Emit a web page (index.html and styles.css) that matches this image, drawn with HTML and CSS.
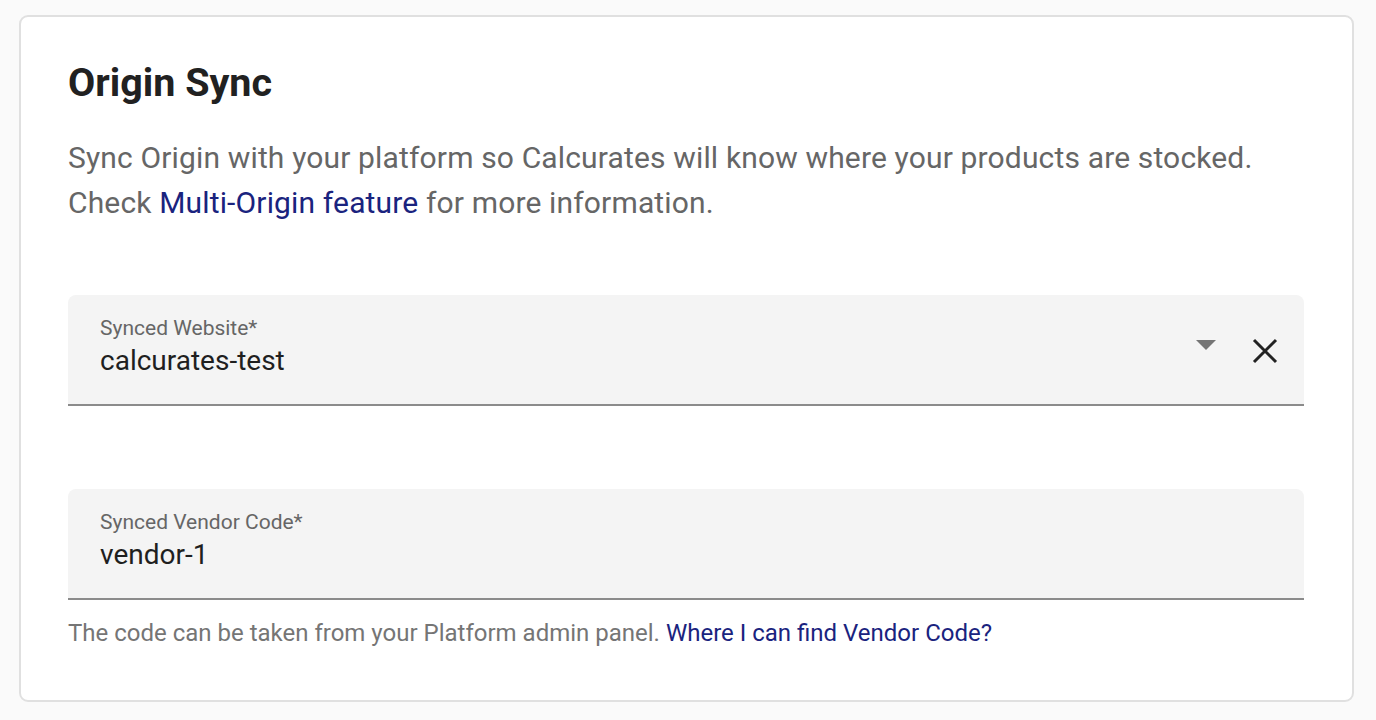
FILE: index.html
```html
<!DOCTYPE html>
<html>
<head>
<meta charset="utf-8">
<link rel="stylesheet" href="styles.css">
</head>
<body>
<div class="card">
  <h1 class="title">Origin Sync</h1>
  <p class="desc">Sync Origin with your platform so Calcurates will know where your products are stocked.<br>Check <a class="link" href="#">Multi-Origin feature</a> for more information.</p>
  <div class="field field-first">
    <div class="field-text">
      <div class="label">Synced Website*</div>
      <div class="value">calcurates-test</div>
    </div>
    <div class="adorn">
      <svg class="caret" width="20" height="10" viewBox="0 0 20 10"><path d="M0 0 L20 0 L10 10 Z" fill="#757575"/></svg>
      <svg class="close" width="26" height="26" viewBox="0 0 26 26"><path d="M2 2 L24 24 M24 2 L2 24" stroke="#222" stroke-width="3" fill="none"/></svg>
    </div>
  </div>
  <div class="field field-second">
    <div class="field-text">
      <div class="label">Synced Vendor Code*</div>
      <div class="value">vendor-1</div>
    </div>
  </div>
  <p class="helper">The code can be taken from your Platform admin panel. <a class="link" href="#">Where I can find Vendor Code?</a></p>
</div>
</body>
</html>
```

FILE: styles.css
```css
html, body {
  margin: 0;
  padding: 0;
  background: #fafafa;
}
body {
  padding: 15px 22px 18px 19px;
  font-family: Roboto, "Liberation Sans", sans-serif;
}
.card {
  background: #fff;
  border: 2px solid #e0e0e0;
  border-radius: 9px;
  padding: 40px 48px 0 47px;
  height: 687px;
  box-sizing: border-box;
}
.title {
  margin: 0;
  font-size: 39.5px;
  font-weight: 700;
  line-height: 52px;
  color: #212121;
}
.desc {
  margin: 26px 0 0 0;
  font-size: 30px;
  letter-spacing: 0.15px;
  line-height: 45px;
  color: #666;
}
.link {
  color: #1a237e;
  text-decoration: none;
}
.field {
  background: #f4f4f4;
  border-radius: 8px 8px 0 0;
  border-bottom: 2px solid #8b8b8b;
  height: 111px;
  box-sizing: border-box;
  display: flex;
  align-items: flex-start;
  padding: 0 26px 0 32px;
}
.field-first {
  margin-top: 70px;
}
.field-second {
  margin-top: 83px;
}
.field-text {
  flex: 1;
  display: flex;
  flex-direction: column;
  padding-top: 21px;
}
.label {
  font-size: 21px;
  line-height: 24px;
  color: #666;
}
.value {
  font-size: 28px;
  line-height: 40px;
  margin-top: 1px;
  color: #1f1f1f;
}
.adorn {
  display: flex;
  align-items: flex-start;
  padding-top: 43px;
}
.caret {
  display: block;
  margin-top: 2px;
  margin-right: 36px;
}
.close {
  display: block;
}
.helper {
  margin: 20px 0 0 0;
  font-size: 24px;
  line-height: 26px;
  color: #757575;
}
```
